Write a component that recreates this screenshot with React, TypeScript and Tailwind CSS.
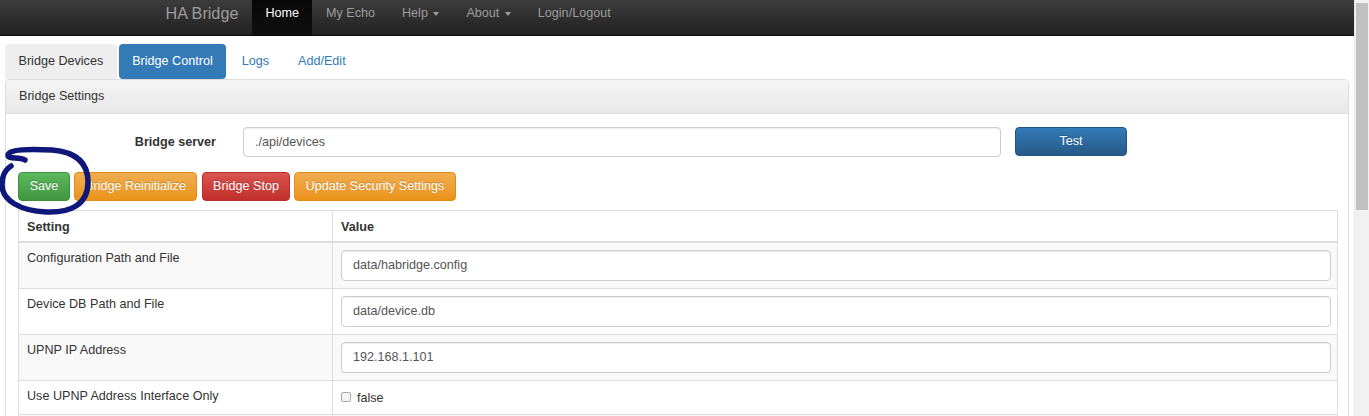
import React from "react";

const rows = [
  { label: "Configuration Path and File", value: "data/habridge.config", striped: true },
  { label: "Device DB Path and File", value: "data/device.db", striped: false },
  { label: "UPNP IP Address", value: "192.168.1.101", striped: true },
];

function Caret() {
  return (
    <span className="inline-block ml-[2px] align-middle w-0 h-0 border-l-[3.5px] border-r-[3.5px] border-t-[4px] border-l-transparent border-r-transparent border-t-[#9d9d9d]" />
  );
}

export default function App() {
  return (
    <div className="relative flex w-[1369px] h-[416px] overflow-hidden bg-white font-['Liberation_Sans',Arial,sans-serif] text-[12.6px] text-[#333]">
      <div className="w-[1354px] shrink-0 flex flex-col">
        {/* Navbar */}
        <div className="h-[36px] shrink-0 flex pl-[152px] bg-gradient-to-b from-[#3c3c3c] to-[#222] border-b border-[#080808]">
          <div className="px-[13.5px] pt-[3px] text-[16.2px] leading-[20px] text-[#9d9d9d]">HA Bridge</div>
          <div className="px-[13.5px] pt-[4px] leading-[18px] text-white bg-gradient-to-b from-[#080808] to-[#0f0f0f]">Home</div>
          <div className="px-[13.5px] pt-[4px] leading-[18px] text-[#9d9d9d]">My Echo</div>
          <div className="px-[13.5px] pt-[4px] leading-[18px] text-[#9d9d9d] whitespace-pre">Help <Caret /></div>
          <div className="px-[13.5px] pt-[4px] leading-[18px] text-[#9d9d9d] whitespace-pre">About <Caret /></div>
          <div className="px-[13.5px] pt-[4px] leading-[18px] text-[#9d9d9d]">Login/Logout</div>
        </div>

        {/* Tabs */}
        <div className="mt-[8px] pl-[5px] flex gap-[2px] h-[35px] shrink-0">
          <div className="px-[13.5px] pt-[8px] leading-[18px] bg-[#eee] rounded-t-[4px] text-[#333]">Bridge Devices</div>
          <div className="px-[13.5px] pt-[8px] leading-[18px] bg-[#337ab7] rounded-[4px] text-white">Bridge Control</div>
          <div className="px-[13.5px] pt-[8px] leading-[18px] text-[#337ab7]">Logs</div>
          <div className="px-[13.5px] pt-[8px] leading-[18px] text-[#337ab7]">Add/Edit</div>
        </div>

        {/* Panel */}
        <div className="ml-[5px] w-[1344px] border border-[#ddd] rounded-t-[4px] flex-1">
          <div className="h-[34px] px-[13px] flex items-center bg-gradient-to-b from-[#f5f5f5] to-[#e8e8e8] border-b border-[#ddd] rounded-t-[4px]">
            Bridge Settings
          </div>
          <div className="pt-[13px] pl-[12px]">
            <div className="flex items-start h-[30px]">
              <div className="w-[198px] text-right font-bold pt-[6px] leading-[18px]">Bridge server</div>
              <div className="ml-[27px] w-[758px] h-[30px] border border-[#ccc] rounded-[4px] px-[11px] flex items-center text-[#555] shadow-[inset_0_1px_1px_rgba(0,0,0,0.075)]">
                ./api/devices
              </div>
              <div className="ml-[14px] w-[112px] h-[29px] flex items-center justify-center rounded-[4px] border border-[#245580] bg-gradient-to-b from-[#337ab7] to-[#265a88] text-white [text-shadow:0_-1px_0_rgba(0,0,0,0.2)]">
                Test
              </div>
            </div>

            <div className="flex mt-[15px] h-[29px]">
              <div className="w-[52px] flex items-center justify-center rounded-[4px] border border-[#3e8f3e] bg-gradient-to-b from-[#5cb85c] to-[#419641] text-white [text-shadow:0_-1px_0_rgba(0,0,0,0.2)]">Save</div>
              <div className="ml-[4px] w-[123px] flex items-center justify-center rounded-[4px] border border-[#e38d13] bg-gradient-to-b from-[#f0ad4e] to-[#eb9316] text-white [text-shadow:0_-1px_0_rgba(0,0,0,0.2)]">Bridge Reinitialize</div>
              <div className="ml-[5px] w-[88px] flex items-center justify-center rounded-[4px] border border-[#b92c28] bg-gradient-to-b from-[#d9534f] to-[#c12e2a] text-white [text-shadow:0_-1px_0_rgba(0,0,0,0.2)]">Bridge Stop</div>
              <div className="ml-[4px] w-[162px] flex items-center justify-center rounded-[4px] border border-[#e38d13] bg-gradient-to-b from-[#f0ad4e] to-[#eb9316] text-white [text-shadow:0_-1px_0_rgba(0,0,0,0.2)]">Update Security Settings</div>
            </div>

            {/* Table */}
            <div className="mt-[9px] w-[1320px] border border-[#ddd]">
              <div className="flex h-[32px] border-b-2 border-[#ddd] font-bold">
                <div className="w-[314px] border-r border-[#ddd] px-[8px] pt-[7px] leading-[18px]">Setting</div>
                <div className="flex-1 px-[8px] pt-[7px] leading-[18px]">Value</div>
              </div>
              {rows.map((r) => (
                <div key={r.label} className={`flex h-[46px] border-b border-[#ddd] ${r.striped ? "bg-[#f9f9f9]" : "bg-white"}`}>
                  <div className="w-[314px] border-r border-[#ddd] px-[8px] pt-[6px] leading-[18px]">{r.label}</div>
                  <div className="flex-1 pl-[8px] pr-[6px] pt-[7px]">
                    <div className="h-[31px] border border-[#ccc] rounded-[4px] bg-white px-[11px] flex items-center text-[#555] shadow-[inset_0_1px_1px_rgba(0,0,0,0.075)]">
                      {r.value}
                    </div>
                  </div>
                </div>
              ))}
              <div className="flex h-[34px] border-b border-[#ddd] bg-white">
                <div className="w-[314px] border-r border-[#ddd] px-[8px] pt-[6px] leading-[18px]">Use UPNP Address Interface Only</div>
                <div className="flex-1 pl-[8px] pt-[8px] flex items-start">
                  <div className="mt-[3px] w-[10px] h-[10px] border border-[#aaa] rounded-[2px] bg-[#f3f3f3]" />
                  <span className="ml-[6px] leading-[18px]">false</span>
                </div>
              </div>
              <div className="flex h-[40px] bg-[#f9f9f9]">
                <div className="w-[314px] border-r border-[#ddd]" />
                <div className="flex-1" />
              </div>
            </div>
          </div>
        </div>
      </div>

      {/* Scrollbar */}
      <div className="w-[15px] shrink-0 bg-[#f1f1f1] border-l border-[#e8e8e8] flex flex-col items-center pt-[3px]">
        <div className="w-[12px] h-[207px] bg-[#c1c1c1]" />
      </div>

      {/* Hand-drawn annotation */}
      <svg className="absolute left-0 top-0 pointer-events-none" width="110" height="230" viewBox="0 0 110 230">
        <path
          d="M 25 160 C 19 156, 8 160, 8 155 C 8 149, 30 149, 52 150 C 76 152, 88 163, 88 182 C 88 205, 70 213, 46 212 C 20 211, 2 200, 2 185 C 2 174, 6 169, 11 166"
          fill="none"
          stroke="#10177a"
          strokeWidth="5.5"
          strokeLinecap="round"
          strokeLinejoin="round"
        />
      </svg>
    </div>
  );
}
